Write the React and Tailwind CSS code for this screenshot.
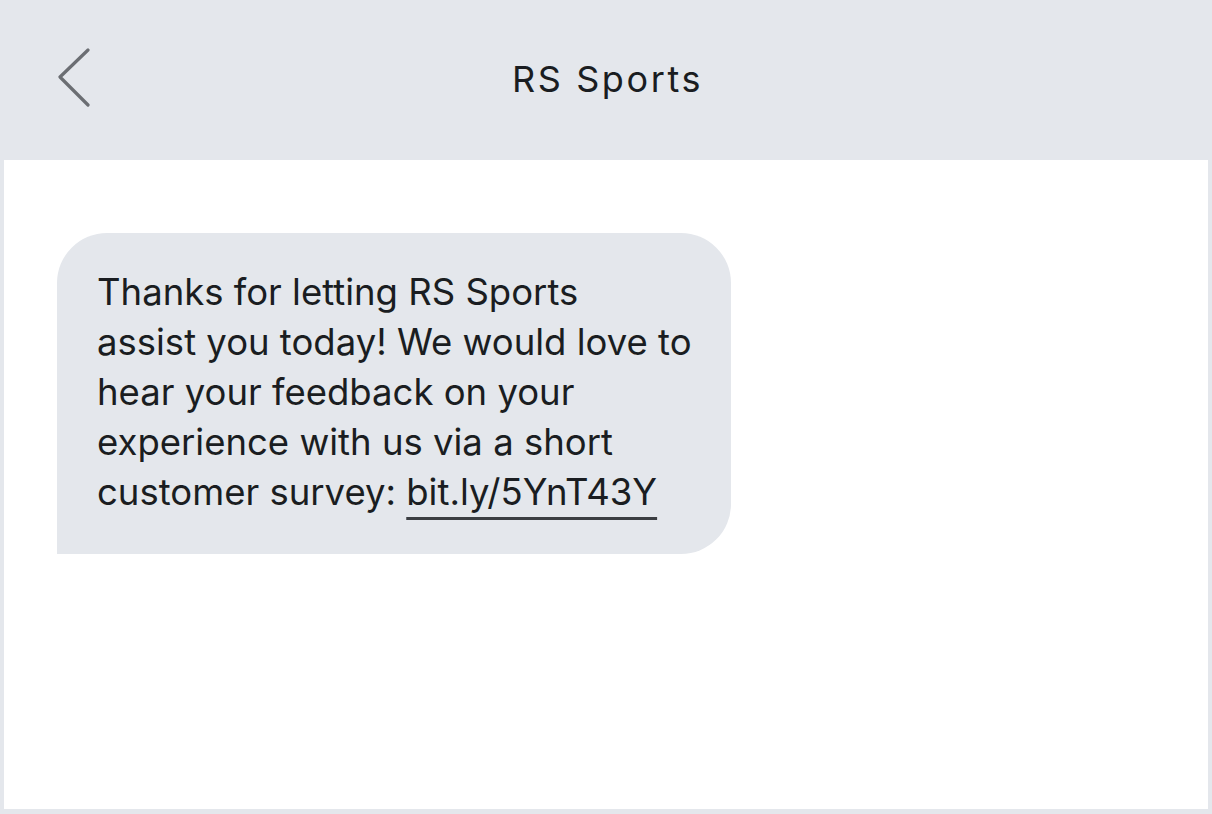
import React from 'react';

const BackChevron = () => (
    <svg width="40" height="64" viewBox="0 0 40 64" fill="none" className="block">
        <path d="M30 4 L2 31 L30 59" stroke="#6b6e73" strokeWidth="3.2" strokeLinecap="round" strokeLinejoin="round" />
    </svg>
);

const App = () => {
    return (
        <div className="w-[1212px] h-[814px] bg-[#e4e7ec] flex flex-col font-['Inter',sans-serif] text-[#1a1d21]">
            {/* Header */}
            <header className="h-[160px] relative flex items-center justify-center shrink-0">
                <button className="absolute left-[58px] top-[46px]">
                    <BackChevron />
                </button>
                <h1 className="text-[36px] tracking-[2.6px] leading-none -mt-[2px] pl-[3px]">RS Sports</h1>
            </header>

            {/* Conversation */}
            <main className="flex-1 bg-white mx-[4px] mb-[5px] pt-[73px] pl-[53px]">
                <div className="w-[674px] bg-[#e4e7ec] rounded-[50px] rounded-bl-none pl-[40px] pt-[34px] pb-[37px]">
                    <p className="text-[36.5px] leading-[50px] whitespace-nowrap">
                        Thanks for letting RS Sports<br />
                        assist you today! We would love to<br />
                        hear your feedback on your<br />
                        experience with us via a short<br />
                        customer survey:{' '}
                        <a className="underline decoration-[2.5px] underline-offset-[12px] decoration-[#3b3e42]">bit.ly/5YnT43Y</a>
                    </p>
                </div>
            </main>
        </div>
    );
};

export default App;
